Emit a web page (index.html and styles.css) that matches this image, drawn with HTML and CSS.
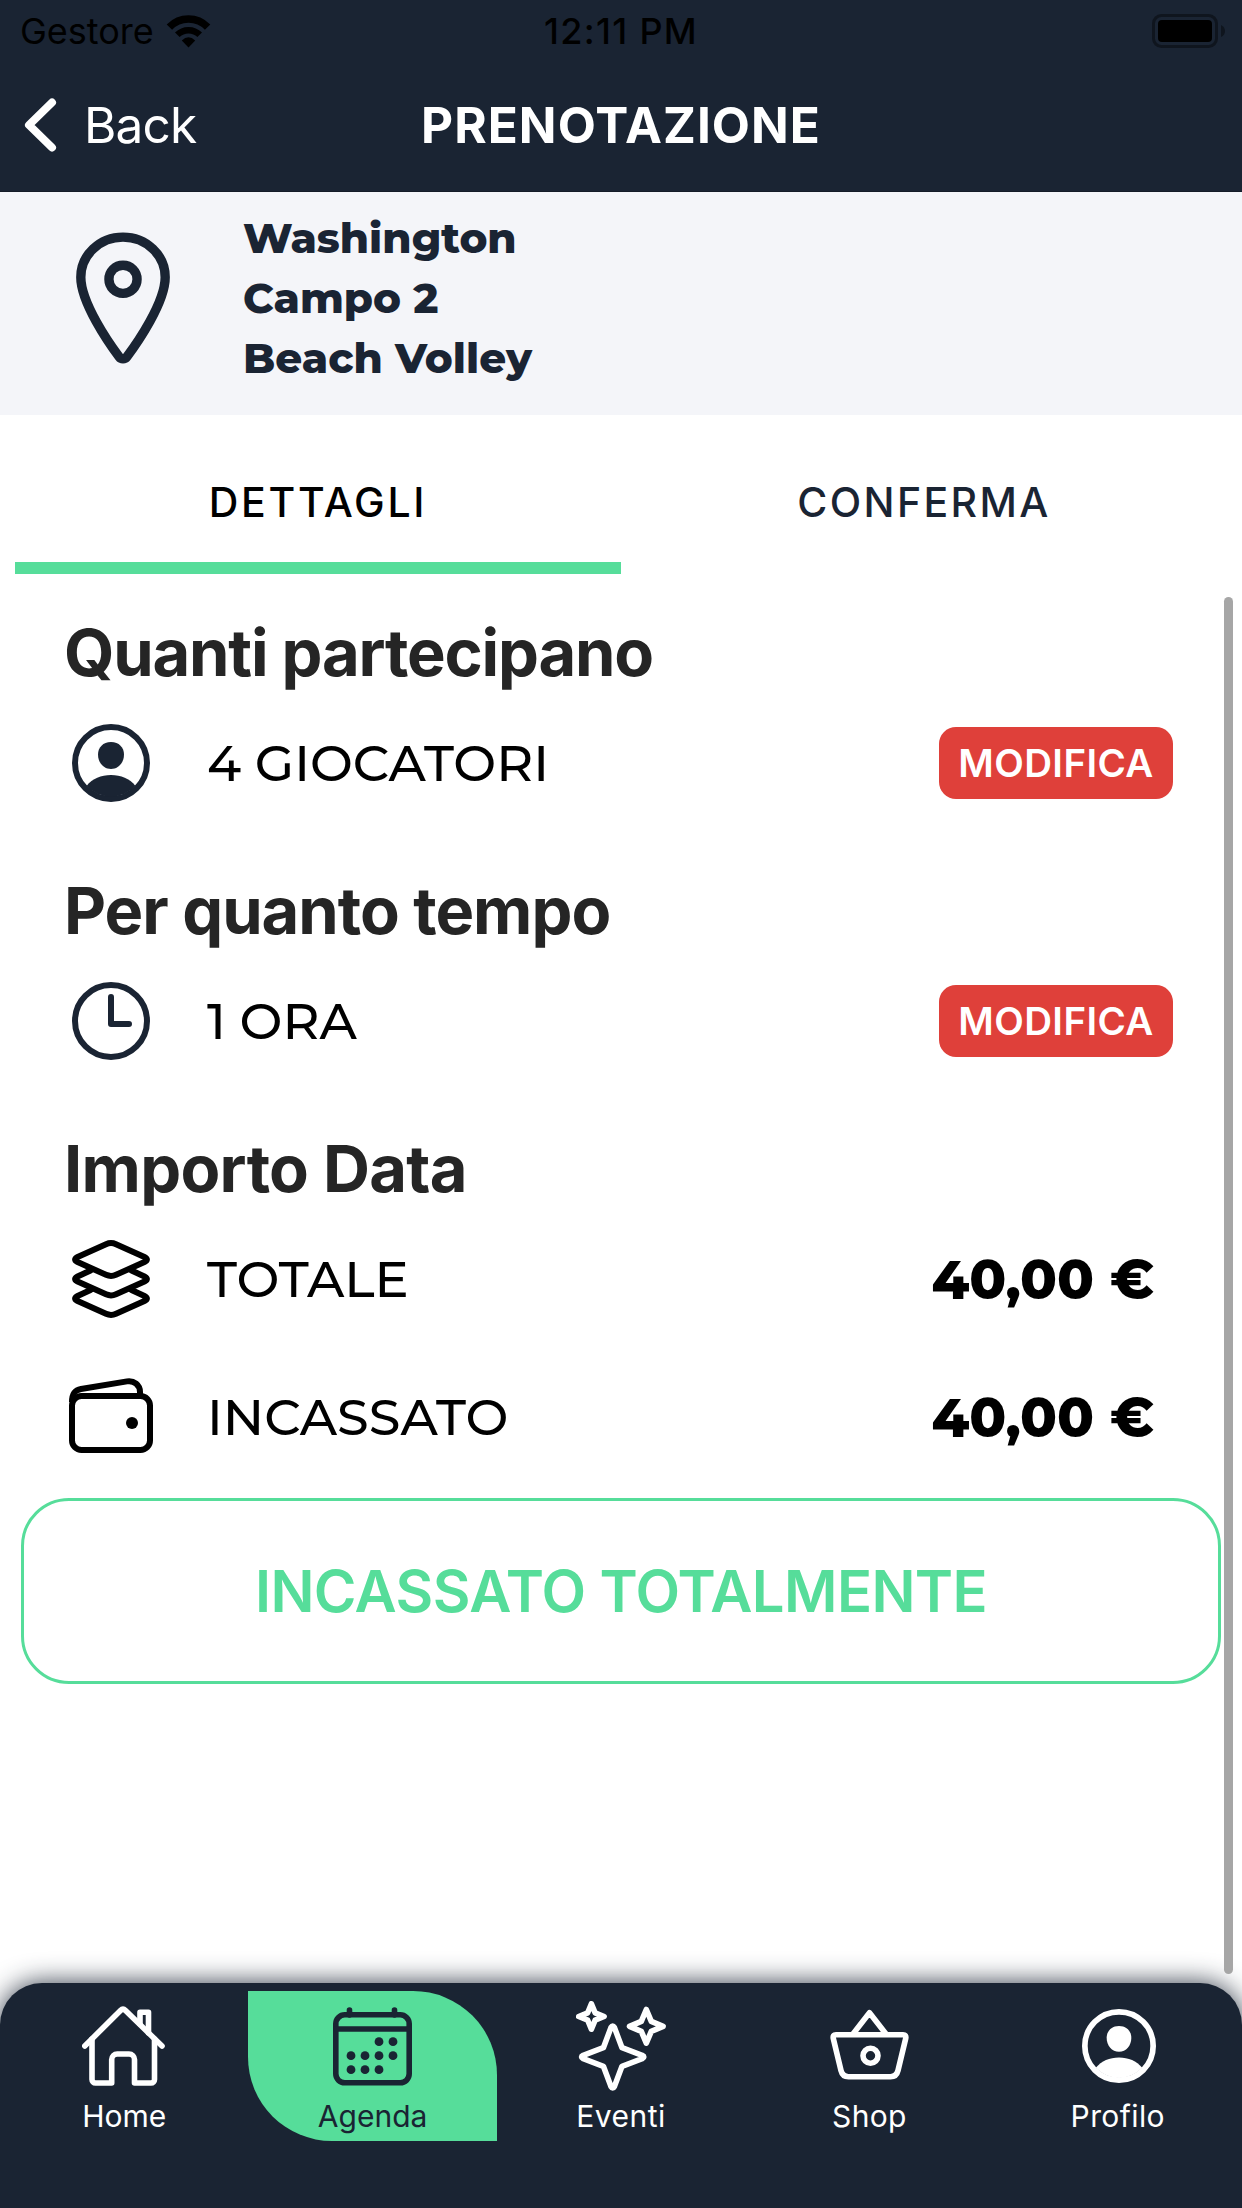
FILE: index.html
```
<!DOCTYPE html>
<html lang="it">
<head>
<meta charset="utf-8">
<title>Prenotazione</title>
<link rel="stylesheet" href="styles.css">
</head>
<body>
<div class="app">
  <header class="header">
    <div class="status">
      <div class="status-left">
        <span class="carrier">Gestore</span>
        <svg class="wifi" viewBox="0 0 45 34"><path d="M3.4 13.2A26.5 26.5 0 0 1 41.6 13.2" fill="none" stroke="#000" stroke-width="7.5"/><path d="M11.3 20.8A15.8 15.8 0 0 1 33.7 20.8" fill="none" stroke="#000" stroke-width="6.5"/><path d="M22.5 33.5L15.8 26.6Q22.5 20 29.2 26.6Z"/></svg>
      </div>
      <span class="time">12:11 PM</span>
      <svg class="battery" viewBox="0 0 74 34"><rect x="1.5" y="1.5" width="63" height="31" rx="8" fill="none" stroke="#0f151e" stroke-width="3"/><rect x="6" y="6" width="54" height="22" rx="4"/><path d="M69 11Q73 13 73 17T69 23Z" fill="#0f151e"/></svg>
    </div>
    <div class="toolbar">
      <a class="back"><svg class="chevron" viewBox="0 0 34 54"><path d="M28 4.500L5 27L28 49.500" fill="none" stroke="#fff" stroke-width="8" stroke-linecap="round" stroke-linejoin="round"/></svg><span>Back</span></a>
      <h1 class="title">PRENOTAZIONE</h1>
    </div>
  </header>

  <section class="location">
    <svg class="pin" viewBox="0 0 512 512" fill="none" stroke="#1a2433" stroke-width="32" stroke-linecap="round" stroke-linejoin="round"><path d="M256 48c-79.500 0-144 61.390-144 137 0 87 96 224.870 131.250 272.490a15.770 15.770 0 0 0 25.500 0C304 409.890 400 272.070 400 185c0-75.610-64.500-137-144-137z"/><circle cx="256" cy="192" r="48"/></svg>
    <div class="place"><div>Washington</div><div>Campo 2</div><div>Beach Volley</div></div>
  </section>

  <nav class="tabs">
    <a class="tab tab-active">DETTAGLI</a>
    <a class="tab tab-confirm">CONFERMA</a>
  </nav>

  <main class="content">
    <section class="group">
      <h2 class="heading heading-players">Quanti partecipano</h2>
      <div class="row">
        <span class="icon"><svg width="78" height="78" viewBox="0 0 78 78" fill="#1a2433"><circle cx="39" cy="39" r="36" fill="none" stroke="#1a2433" stroke-width="6"/><path d="M39 18C47 18 52 23.500 52 30.500C52 38.500 46.500 45 39 45S26 38.500 26 30.500C26 23.500 31 18 39 18Z"/><path d="M14.500 62C20.500 54.500 29 51 39 51S57.500 54.500 63.500 62A33.600 33.600 0 0 1 14.500 62Z"/></svg></span>
        <span class="label">4 GIOCATORI</span>
        <button class="edit">MODIFICA</button>
      </div>
    </section>
    <section class="group">
      <h2 class="heading heading-time">Per quanto tempo</h2>
      <div class="row">
        <span class="icon"><svg width="78" height="78" viewBox="0 0 78 78" fill="none" stroke="#1a2433" stroke-width="6" stroke-linecap="round" stroke-linejoin="round"><circle cx="39" cy="39" r="36"/><path d="M39 15V42H57"/></svg></span>
        <span class="label">1 ORA</span>
        <button class="edit">MODIFICA</button>
      </div>
    </section>
    <section class="group">
      <h2 class="heading heading-amount">Importo Data</h2>
      <div class="row">
        <span class="icon"><svg width="78" height="78" viewBox="0 0 78 78" fill="none" stroke="#000" stroke-width="6" stroke-linecap="round" stroke-linejoin="round"><path d="M34 4.200L5 17.200Q1.200 19.500 5 21.800L34 34.800Q39 37 44 34.800L73 21.800Q76.800 19.500 73 17.200L44 4.200Q39 2 34 4.200Z"/><path d="M18.500 30.500L5 36.700Q1.200 39 5 41.300L34 54.300Q39 56.500 44 54.300L73 41.300Q76.800 39 73 36.700L59.500 30.500"/><path d="M18.500 50L5 56.200Q1.200 58.500 5 60.800L34 73.800Q39 76 44 73.800L73 60.800Q76.800 58.500 73 56.200L59.500 50"/></svg></span>
        <span class="label">TOTALE</span>
        <span class="amount">40,00 €</span>
      </div>
      <div class="row">
        <span class="icon"><svg width="84" height="78" viewBox="0 0 84 78" fill="none" stroke="#000" stroke-width="6"><rect x="3" y="18" width="78" height="54" rx="9.500"/><path d="M3 24C3 15 6 12 12 11L58 3.400C65 2.300 71 7 71 14V19"/><circle cx="63" cy="45" r="6" fill="#000" stroke="none"/></svg></span>
        <span class="label">INCASSATO</span>
        <span class="amount">40,00 €</span>
      </div>
    </section>
    <button class="collect">INCASSATO TOTALMENTE</button>
  </main>
  <div class="scrollbar"></div>

  <footer class="dock">
    <a class="item">
      <span class="glyph"><svg width="84" height="80" viewBox="1 0 84 80" fill="none" stroke="#fff" stroke-width="5.600" stroke-linecap="round" stroke-linejoin="round"><path d="M3.800 40L39.500 4.500Q42 2 44.500 4.500L81 40"/><path d="M11 33V73.500a3.500 3.500 0 0 0 3.500 3.500H30.700V53.500a5.500 5.500 0 0 1 5.500-5.500H48a5.500 5.500 0 0 1 5.500 5.500V77H70a3.500 3.500 0 0 0 3.500-3.500V33M59 18V6.200H67.500V27"/></svg></span>
      <span class="name">Home</span>
    </a>
    <a class="item item-active">
      <span class="glyph"><svg width="79" height="80" viewBox="0 -1 79 80" fill="none" stroke="#1a2433" stroke-width="5.600" stroke-linecap="round"><rect x="2.800" y="7.800" width="73.400" height="68" rx="9"/><path d="M3 22H76M16.500 3V8M61.500 3V8"/><g fill="#1a2433" stroke="none"><circle cx="46" cy="34.700" r="4.400"/><circle cx="60" cy="34.700" r="4.400"/><circle cx="18" cy="48.700" r="4.400"/><circle cx="32" cy="48.700" r="4.400"/><circle cx="46" cy="48.700" r="4.400"/><circle cx="60" cy="48.700" r="4.400"/><circle cx="18" cy="62.700" r="4.400"/><circle cx="32" cy="62.700" r="4.400"/><circle cx="46" cy="62.700" r="4.400"/></g></svg></span>
      <span class="name">Agenda</span>
    </a>
    <a class="item">
      <span class="glyph"><svg width="90" height="90" viewBox="0 0 90 90" fill="none" stroke="#fff" stroke-width="5.600" stroke-linejoin="round"><path d="M35 26.500Q36.700 23.500 38.400 26.500L46 46.700L66.200 54.300Q69.500 56 66.200 57.700L46 65.300L38.400 85.500Q36.700 88.500 35 85.500L27.400 65.300L7.200 57.700Q3.900 56 7.200 54.300L27.400 46.700Z"/><path d="M70.300 8.500L75.300 20.300L87.100 25.300L75.300 30.300L70.300 42.100L65.300 30.300L53.500 25.300L65.300 20.300Z"/><path d="M15.400 2.800L19.100 11.800L28.100 15.500L19.100 19.200L15.400 28.200L11.700 19.200L2.700 15.500L11.700 11.800Z"/></svg></span>
      <span class="name eventi">Eventi</span>
    </a>
    <a class="item">
      <span class="glyph"><svg width="80" height="74" viewBox="-1 0 80 74" fill="none" stroke="#fff" stroke-width="5.600" stroke-linejoin="round"><path d="M6 25.700H73Q76.500 25.700 75.700 29.500L68 61.500Q66.500 67.700 60.500 67.700H18.500Q12.500 67.700 11 61.500L3.300 29.500Q2.500 25.700 6 25.700ZM23 25L39.500 3.800L56 25"/><circle cx="40.500" cy="46.700" r="7.500"/></svg></span>
      <span class="name shop">Shop</span>
    </a>
    <a class="item">
      <span class="glyph"><svg class="avatar" width="74" height="74" viewBox="0 0 78 78" fill="#fff"><circle cx="39" cy="39" r="36" fill="none" stroke="#fff" stroke-width="6"/><path d="M39 18C47 18 52 23.500 52 30.500C52 38.500 46.500 45 39 45S26 38.500 26 30.500C26 23.500 31 18 39 18Z"/><path d="M14.500 62C20.500 54.500 29 51 39 51S57.500 54.500 63.500 62A33.600 33.600 0 0 1 14.500 62Z"/></svg></span>
      <span class="name profilo">Profilo</span>
    </a>
  </footer>
</div>
</body>
</html>
```
FILE: styles.css
```
* { box-sizing: border-box; }
body { margin: 0; background: #fff; font-family: Inter, "Liberation Sans", sans-serif; color: #000; }
h1, h2 { margin: 0; }
button { border: 0; padding: 0; background: none; font-family: inherit; }
svg { display: block; flex: none; }

.app { position: relative; display: flex; flex-direction: column; width: 1242px; height: 2208px; overflow: hidden; }

/* Status bar and toolbar */
.header { height: 192px; background: #1a2433; border-bottom: 1px solid #141c28; }
.status { display: grid; grid-template-columns: 1fr auto 1fr; align-items: center; height: 62px; padding: 0 16px 0 20px; font-size: 36px; line-height: 62px; }
.status-left { display: flex; align-items: center; gap: 12px; }
.wifi { width: 45px; height: 34px; }
.time { margin-right: 4px; font-weight: 500; letter-spacing: 1.3px; }
.battery { width: 74px; height: 34px; justify-self: end; }
.toolbar { display: grid; grid-template-columns: 1fr auto 1fr; align-items: center; height: 126px; padding: 0 24px 0 24px; color: #fff; font-size: 49.5px; line-height: 60px; }
.back { display: flex; align-items: center; gap: 26px; letter-spacing: -0.8px; }
.chevron { width: 34px; height: 54px; }
.title { font-size: 49.5px; font-weight: 700; letter-spacing: 1.05px; }

/* Location band */
.location { display: flex; align-items: flex-start; height: 223px; padding: 16px 0 0 48px; background: #f4f5f9; }
.pin { width: 150px; height: 150px; margin-top: 15px; }
.place { margin-left: 45px; color: #1a2433; font-family: Montserrat, Inter, sans-serif; font-size: 42px; font-weight: 800; line-height: 60px; }

/* Tabs */
.tabs { display: grid; grid-template-columns: 1fr 1fr; height: 159px; padding: 0 15px; }
.tab { padding-top: 27px; border-bottom: 12px solid transparent; text-align: center; font-size: 41px; font-weight: 500; letter-spacing: 2.7px; line-height: 120px; color: #1a2433; }
.tab-active { border-bottom-color: #56dd9a; color: #000; }
.tab-confirm { letter-spacing: 2.4px; }

/* Booking details */
.group { padding: 37px 69px 0 63px; }
.heading { margin-left: 1px; color: #252525; font-size: 65px; font-weight: 700; line-height: 83px; }
.heading-players { letter-spacing: -1.2px; }
.heading-time { letter-spacing: -1px; }
.heading-amount { letter-spacing: -0.7px; }
.row { display: flex; align-items: center; height: 138px; }
.icon { display: flex; justify-content: center; width: 96px; }
.label { flex: 1; margin-left: 48px; font-family: Montserrat, Inter, sans-serif; font-size: 51px; font-weight: 500; line-height: 60px; }
.edit { width: 234px; height: 72px; border-radius: 17px; background: #df403a; color: #fff; font-size: 38.5px; font-weight: 600; letter-spacing: 0.4px; line-height: 72px; }
.amount { margin-right: 19px; padding-top: 2px; font-family: Montserrat, Inter, sans-serif; font-size: 54px; font-weight: 800; line-height: 60px; }
.collect { display: block; width: 1200px; height: 186px; margin: 12px 21px 0; border: 3px solid #56dd9a; border-radius: 48px; color: #56dd9a; font-size: 58px; font-weight: 600; letter-spacing: -0.6px; line-height: 180px; }
.scrollbar { position: absolute; top: 597px; right: 9px; width: 9px; height: 1377px; border-radius: 5px; background: #a6a6a6; }

/* Bottom dock */
.dock { display: grid; grid-template-columns: repeat(5, 1fr); height: 225px; margin-top: auto; padding-top: 8px; border-radius: 42px 42px 0 0; background: #1a2433; box-shadow: 0 0 27px rgba(26, 36, 51, 0.9); }
.item { display: flex; flex-direction: column; align-items: center; height: 150px; color: #fff; }
.item-active { border-radius: 0 84px 0 84px; background: #56dd9a; color: #1a2433; }
.glyph { display: flex; align-items: center; height: 110px; }
.avatar { margin-left: 2px; }
.name { height: 32px; font-size: 30px; line-height: 30px; }
.eventi { letter-spacing: 0.5px; }
.shop { letter-spacing: 0.3px; }
.profilo { letter-spacing: 0.4px; }
```
